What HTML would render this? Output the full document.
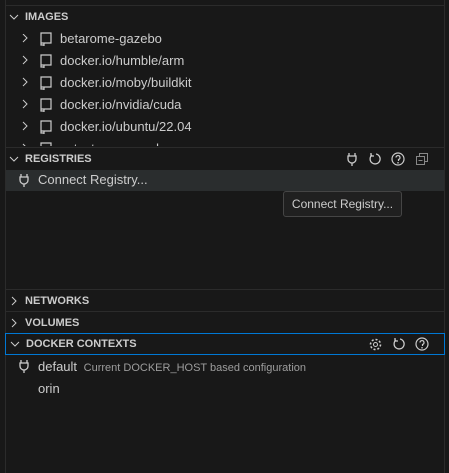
<!DOCTYPE html><html><head><style>
body{margin:0;width:449px;height:473px;background:#181818;font-family:"Liberation Sans","DejaVu Sans",sans-serif;color:#ccc;position:relative;overflow:hidden}
.a{position:absolute}
.h{position:absolute;left:5px;width:440px;height:22px;font-size:11px;font-weight:bold;color:#ccc;line-height:22px;border-top:1px solid #2b2b2b;box-sizing:border-box}
.h span{position:absolute;left:20px}
.it{position:absolute;font-size:13px;line-height:22px;color:#ccc}
svg{position:absolute}
</style></head><body>
<div class="a" style="left:5px;top:0;width:1px;height:473px;background:#2b2b2b"></div>
<div class="a" style="left:444px;top:0;width:1px;height:473px;background:#2b2b2b"></div>
<div class="h" style="top:5px"><svg style="left:4px;top:6px" width="10" height="10"><path d="M1 3l4 4 4-4" stroke="#ccc" fill="none"/></svg><span>IMAGES</span></div>
<div class="h" style="top:147px;border-top-color:#2b2b2b"><svg style="left:4px;top:6px" width="10" height="10"><path d="M1 3l4 4 4-4" stroke="#ccc" fill="none"/></svg><span>REGISTRIES</span>
<svg style="left:340px;top:4px" width="14" height="14"><path d="M4 1v3M10 1v3M3 4h8v3a4 4 0 0 1-8 0zM7 11v3" stroke="#ccc" fill="none" stroke-width="1.3"/></svg>
<svg style="left:363px;top:4px" width="14" height="14"><path d="M4 3a5 5 0 1 0 4-1" stroke="#ccc" fill="none" stroke-width="1.3"/><path d="M3 1v3h3" stroke="#ccc" fill="none" stroke-width="1.3"/></svg>
<svg style="left:386px;top:4px" width="14" height="14"><circle cx="7" cy="7" r="6" stroke="#ccc" fill="none" stroke-width="1.2"/><path d="M5 5.5a2 2 0 1 1 2.5 2V9" stroke="#ccc" fill="none" stroke-width="1.2"/><circle cx="7" cy="10.8" r=".8" fill="#ccc"/></svg>
<svg style="left:410px;top:4px" width="14" height="14"><rect x="1.5" y="4.5" width="8" height="8" stroke="#888" fill="none"/><path d="M4.5 4.5v-3h8v8h-3M3.5 8.5h4" stroke="#888" fill="none"/></svg>
</div>
<div class="a" style="left:6px;top:170px;width:438px;height:21px;background:#2a2d2e"></div>
<svg style="left:17px;top:173px" width="14" height="14"><path d="M4 1v3M10 1v3M3 4h8v3a4 4 0 0 1-8 0zM7 11v3" stroke="#ccc" fill="none" stroke-width="1.3"/></svg>
<div class="it" style="left:38px;top:169px">Connect Registry...</div>
<div class="a" style="left:283px;top:191px;width:117px;height:24px;background:#202020;border:1px solid #454545;border-radius:3px;font-size:12px;line-height:24px;text-align:center;color:#ccc">Connect Registry...</div>
<div class="h" style="top:289px"><svg style="left:4px;top:6px" width="10" height="10"><path d="M3 1l4 4-4 4" stroke="#ccc" fill="none"/></svg><span>NETWORKS</span></div>
<div class="h" style="top:311px"><svg style="left:4px;top:6px" width="10" height="10"><path d="M3 1l4 4-4 4" stroke="#ccc" fill="none"/></svg><span>VOLUMES</span></div>
<div class="h" style="top:333px;border:1px solid #0078d4;height:22px"><svg style="left:4px;top:5px" width="10" height="10"><path d="M1 3l4 4 4-4" stroke="#ccc" fill="none"/></svg><span style="top:-1px">DOCKER CONTEXTS</span>
<svg style="left:362px;top:3px" width="15" height="15"><circle cx="7.5" cy="7.5" r="2" stroke="#ccc" fill="none"/><circle cx="7.5" cy="7.5" r="5" stroke="#ccc" fill="none" stroke-width="1.6" stroke-dasharray="2 1.9"/></svg>
<svg style="left:386px;top:3px" width="14" height="14"><path d="M4 3a5 5 0 1 0 4-1" stroke="#ccc" fill="none" stroke-width="1.3"/><path d="M3 1v3h3" stroke="#ccc" fill="none" stroke-width="1.3"/></svg>
<svg style="left:409px;top:3px" width="14" height="14"><circle cx="7" cy="7" r="6" stroke="#ccc" fill="none" stroke-width="1.2"/><path d="M5 5.5a2 2 0 1 1 2.5 2V9" stroke="#ccc" fill="none" stroke-width="1.2"/><circle cx="7" cy="10.8" r=".8" fill="#ccc"/></svg>
</div>
<svg style="left:17px;top:359px" width="14" height="14"><path d="M4 1v3M10 1v3M3 4h8v3a4 4 0 0 1-8 0zM7 11v3" stroke="#ccc" fill="none" stroke-width="1.3"/></svg>
<div class="it" style="left:38px;top:356px">default <span style="font-size:11px;color:#9d9d9d;margin-left:3px">Current DOCKER_HOST based configuration</span></div>
<div class="it" style="left:38px;top:378px">orin</div>

<div class="a" style="left:6px;top:27px;width:438px;height:119px;overflow:hidden">
 <svg style="left:14px;top:7px" width="10" height="140"><g stroke="#ccc" fill="none"><path d="M3 0l4 4-4 4"/><path d="M3 22l4 4-4 4"/><path d="M3 44l4 4-4 4"/><path d="M3 66l4 4-4 4"/><path d="M3 88l4 4-4 4"/><path d="M3 110l4 4-4 4"/></g></svg>
 <svg style="left:33px;top:5px" width="14" height="140"><g stroke="#ccc" fill="none" stroke-width="1.2"><path d="M2 1h10v10H2zM2 11v2h3M5 11v3M9 11h3"/><path d="M2 23h10v10H2zM2 33v2h3M5 33v3M9 33h3"/><path d="M2 45h10v10H2zM2 55v2h3M5 55v3M9 55h3"/><path d="M2 67h10v10H2zM2 77v2h3M5 77v3M9 77h3"/><path d="M2 89h10v10H2zM2 99v2h3M5 99v3M9 99h3"/><path d="M2 111h10v10H2z"/></g></svg>
 <div class="it" style="left:54px;top:1px">betarome-gazebo</div>
 <div class="it" style="left:54px;top:23px">docker.io/humble/arm</div>
 <div class="it" style="left:54px;top:45px">docker.io/moby/buildkit</div>
 <div class="it" style="left:54px;top:67px">docker.io/nvidia/cuda</div>
 <div class="it" style="left:54px;top:89px">docker.io/ubuntu/22.04</div>
 <div class="it" style="left:54px;top:111px">ext_stream_ws-dev</div>
</div>
</body></html>
